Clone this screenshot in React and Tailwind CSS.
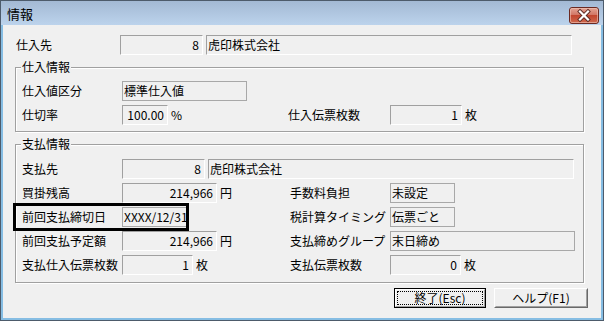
import React from 'react';

const sunken =
  'h-[20px] border border-t-[#a0a0a0] border-l-[#a0a0a0] border-r-white border-b-white bg-[#f0f0f0] leading-[18px] whitespace-nowrap overflow-hidden';
const flat =
  'h-[20px] border border-[#a8a8a8] bg-[#f0f0f0] leading-[18px] whitespace-nowrap overflow-hidden';

function Num({ w, children }) {
  return <div className={`${sunken} ${w} text-right pr-[3px]`}>{children}</div>;
}

function Txt({ w, children, sunk }) {
  return <div className={`${sunk ? sunken : flat} ${w} pl-[1px]`}>{children}</div>;
}

function Row({ left, right }) {
  return (
    <div className="flex h-[20px] items-center">
      <div className="w-[268px] shrink-0 flex items-center">{left}</div>
      {right && <div className="flex items-center">{right}</div>}
    </div>
  );
}

function Label({ children }) {
  return <div className="w-[100px] shrink-0 leading-[20px] whitespace-nowrap">{children}</div>;
}

function Unit({ children }) {
  return <span className="ml-[3px] leading-[20px]">{children}</span>;
}

function Group({ title, children, className }) {
  return (
    <div
      className={`relative w-[569px] border border-[#a0a0a0] shadow-[inset_1px_1px_0_#ffffff,1px_1px_0_#ffffff] pl-[6px] flex flex-col gap-[4px] ${className}`}
    >
      <span className="absolute left-[5px] -top-[10px] bg-[#f0f0f0] px-[1px] leading-[18px]">{title}</span>
      {children}
    </div>
  );
}

function CloseButton() {
  return (
    <svg width="30" height="17" viewBox="0 0 30 17" className="block">
      <defs>
        <linearGradient id="cg" x1="0" y1="0" x2="0" y2="1">
          <stop offset="0" stopColor="#e4a797" />
          <stop offset="0.45" stopColor="#d27766" />
          <stop offset="0.5" stopColor="#c2462f" />
          <stop offset="1" stopColor="#cf6a4f" />
        </linearGradient>
      </defs>
      <rect x="0.5" y="0.5" width="29" height="16" rx="2.5" fill="url(#cg)" stroke="#6b2a22" />
      <rect x="1.5" y="1.5" width="27" height="14" rx="1.5" fill="none" stroke="#f0c4b8" strokeOpacity="0.6" />
      <path d="M11 4.5 L19 12.5 M19 4.5 L11 12.5" stroke="#5a2a24" strokeWidth="4" strokeLinecap="square" />
      <path d="M11 4.5 L19 12.5 M19 4.5 L11 12.5" stroke="#ffffff" strokeWidth="2.2" strokeLinecap="square" />
    </svg>
  );
}

export default function App() {
  return (
    <div className="relative w-[604px] h-[321px] border border-[#4d5b6b] bg-[#bcd3ec] flex flex-col text-[12px] text-black font-['Noto_Sans_CJK_JP','Noto_Sans',sans-serif]">
      {/* タイトルバー */}
      <div className="h-[24px] flex items-center justify-between bg-gradient-to-b from-[#a3b9d4] to-[#bcd3ec] pl-[6px] pr-[4px]">
        <span className="text-[13px] leading-[16px] mt-[2px]">情報</span>
        <div className="mt-[4px]">
          <CloseButton />
        </div>
      </div>

      {/* 本体 */}
      <div className="flex-1 border-x-2 border-b-2 border-[#86bde3]">
        <div className="h-full bg-[#f0f0f0] pl-[12px] pt-[10px]">
          <div className="flex items-center h-[20px]">
            <div className="ml-[1px] w-[104px] leading-[20px]">仕入先</div>
            <Num w="w-[83px]">8</Num>
            <div className="ml-[3px]">
              <Txt w="w-[366px]" sunk>
                虎印株式会社
              </Txt>
            </div>
          </div>

          <Group title="仕入情報" className="mt-[12px] pt-[13px] pb-[6px]">
            <Row
              left={
                <>
                  <Label>仕入値区分</Label>
                  <Txt w="w-[125px]">標準仕入値</Txt>
                </>
              }
            />
            <Row
              left={
                <>
                  <Label>仕切率</Label>
                  <Num w="w-[46px]">100.00</Num>
                  <Unit>%</Unit>
                </>
              }
              right={
                <>
                  <div className="w-[100px] -ml-[2px] mr-[2px] leading-[20px]">仕入伝票枚数</div>
                  <Num w="w-[72px]">1</Num>
                  <Unit>枚</Unit>
                </>
              }
            />
          </Group>

          <Group title="支払情報" className="mt-[12px] pt-[14px] pb-[7px]">
            <div className="flex h-[20px] items-center">
              <Label>支払先</Label>
              <Num w="w-[83px]">8</Num>
              <div className="ml-[3px]">
                <Txt w="w-[366px]" sunk>
                  虎印株式会社
                </Txt>
              </div>
            </div>
            <Row
              left={
                <>
                  <Label>買掛残高</Label>
                  <Num w="w-[95px]">214,966</Num>
                  <Unit>円</Unit>
                </>
              }
              right={
                <>
                  <Label>手数料負担</Label>
                  <Txt w="w-[65px]">未設定</Txt>
                </>
              }
            />
            <Row
              left={
                <>
                  <Label>前回支払締切日</Label>
                  <Txt w="w-[66px]">XXXX/12/31</Txt>
                </>
              }
              right={
                <>
                  <Label>税計算タイミング</Label>
                  <Txt w="w-[65px]">伝票ごと</Txt>
                </>
              }
            />
            <Row
              left={
                <>
                  <Label>前回支払予定額</Label>
                  <Num w="w-[95px]">214,966</Num>
                  <Unit>円</Unit>
                </>
              }
              right={
                <>
                  <Label>支払締めグループ</Label>
                  <Txt w="w-[185px]">末日締め</Txt>
                </>
              }
            />
            <Row
              left={
                <>
                  <Label>支払仕入伝票枚数</Label>
                  <Num w="w-[71px]">1</Num>
                  <Unit>枚</Unit>
                </>
              }
              right={
                <>
                  <Label>支払伝票枚数</Label>
                  <Num w="w-[71px]">0</Num>
                  <Unit>枚</Unit>
                </>
              }
            />
          </Group>

          <div className="flex justify-end gap-[8px] pr-[13px] mt-[5px]">
            <div className="w-[92px] h-[20px] border border-black bg-[#f0f0f0]">
              <div className="h-full border border-t-white border-l-white border-r-[#a0a0a0] border-b-[#a0a0a0] p-[1px]">
                <div className="h-full border border-dotted border-black flex items-center justify-center leading-[14px]">
                  終了(Esc)
                </div>
              </div>
            </div>
            <div className="w-[94px] h-[20px] border border-t-white border-l-white border-r-[#696969] border-b-[#696969] bg-[#f0f0f0]">
              <div className="h-full border border-transparent border-r-[#a0a0a0] border-b-[#a0a0a0] flex items-center justify-center leading-[14px]">
                ヘルプ(F1)
              </div>
            </div>
          </div>
        </div>
      </div>

      {/* 注目枠 */}
      <div className="absolute left-[12px] top-[202px] w-[176px] h-[28px] border-[3px] border-black pointer-events-none" />
    </div>
  );
}
